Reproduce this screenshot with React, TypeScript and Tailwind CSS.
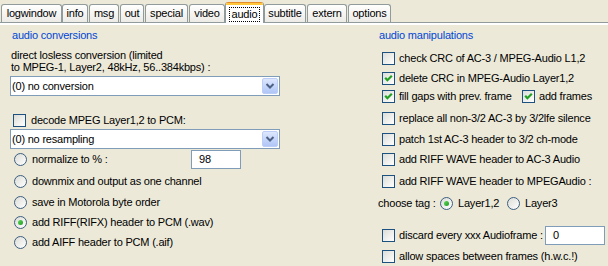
import React from 'react';

const tabs = [
  { label: 'logwindow', cls: 'w-[61px]' },
  { label: 'info', cls: 'w-[26px]' },
  { label: 'msg', cls: 'w-[30px] ml-[1px]' },
  { label: 'out', cls: 'w-[24px] ml-[1px]' },
  { label: 'special', cls: 'w-[43px] ml-[1px]' },
  { label: 'video', cls: 'w-[36px] ml-[1px]' },
  { label: 'audio', cls: 'w-[39px]', active: true },
  { label: 'subtitle', cls: 'w-[42px]' },
  { label: 'extern', cls: 'w-[40px] ml-[1px]' },
  { label: 'options', cls: 'w-[43px] ml-[1px]' },
];

function Tab({ label, cls, active }: { label: string; cls: string; active?: boolean }) {
  if (active) {
    return (
      <div className={`${cls} h-[21px] -mb-px relative z-10 flex flex-col bg-white border-x border-[#919B9C] rounded-t-[3px] overflow-hidden`}>
        <div className="h-[1px] bg-[#E68B2C]" />
        <div className="h-[2px] bg-[#FFC83C]" />
        <div className="flex-1 flex items-center justify-center">
          <span className="outline-1 outline-dotted outline-black px-[2px] leading-[13px]">{label}</span>
        </div>
      </div>
    );
  }
  return (
    <div className={`${cls} h-[18px] flex items-center justify-center border-x border-t border-[#919B9C] rounded-t-[3px] bg-linear-to-b from-white to-[#ECEBE6]`}>
      {label}
    </div>
  );
}

function CheckBox({ checked }: { checked?: boolean }) {
  return (
    <div className="w-[13px] h-[13px] shrink-0 border border-[#1C5180] bg-linear-to-br from-[#DCDCD7] to-white flex items-center justify-center">
      {checked && (
        <svg width="11" height="11" viewBox="0 0 11 11">
          <path d="M2.2 4.8 L4.4 7.2 L8.8 2.8" fill="none" stroke="#21A121" strokeWidth="2.2" />
        </svg>
      )}
    </div>
  );
}

function Radio({ checked }: { checked?: boolean }) {
  return (
    <div className="w-[13px] h-[13px] shrink-0 rounded-full border border-[#3C5F80] bg-linear-to-br from-[#DCDCD7] to-white flex items-center justify-center">
      {checked && <div className="w-[5px] h-[5px] rounded-full bg-linear-to-br from-[#5BD85B] to-[#1E9B1E]" />}
    </div>
  );
}

function Combo({ value }: { value: string }) {
  return (
    <div className="h-[20px] flex items-center bg-white border border-[#7F9DB9] pl-[1px]">
      <span className="flex-1">{value}</span>
      <div className="w-[16px] h-[16px] mr-px flex items-center justify-center rounded-[2px] border border-[#BCCEF8] bg-linear-to-b from-[#DDE7FD] to-[#B0C6F6]">
        <svg width="10" height="8" viewBox="0 0 10 8">
          <path d="M1.5 2 L5 5.5 L8.5 2" fill="none" stroke="#4D6185" strokeWidth="2" />
        </svg>
      </div>
    </div>
  );
}

function Field({ value, cls }: { value: string; cls: string }) {
  return <div className={`${cls} h-[19px] shrink-0 bg-white border border-[#7F9DB9] pl-[7px] flex items-center`}>{value}</div>;
}

export default function App() {
  return (
    <div className="w-[608px] h-[266px] overflow-hidden bg-[#ECE9D8] text-black text-[11px] leading-[13px] tracking-[-0.2px] whitespace-nowrap font-['Liberation_Sans',Arial,sans-serif]">
      <div className="h-[22px] flex items-end pl-[1px]">
        {tabs.map((t) => (
          <Tab key={t.label} {...t} />
        ))}
      </div>
      <div className="border-t border-[#919B9C]">
        <div className="h-[2px] bg-white" />
        <div className="flex pl-[10px]">
          {/* audio conversions */}
          <div className="w-[270px] flex flex-col">
            <div className="mt-[4px] pl-[2px] text-[#0046D5]">audio conversions</div>
            <div className="mt-[7px] pl-[1px] leading-[12px]">
              direct losless conversion (limited
              <br />
              to MPEG-1, Layer2, 48kHz, 56..384kbps) :
            </div>
            <div className="mt-[3px]">
              <Combo value="(0) no conversion" />
            </div>
            <div className="mt-[18px] flex items-center gap-[5px] pl-[3px]">
              <CheckBox />
              <span>decode MPEG Layer1,2 to PCM:</span>
            </div>
            <div className="mt-[2px]">
              <Combo value="(0) no resampling" />
            </div>
            <div className="h-[20px] flex items-center pl-[4px]">
              <Radio />
              <span className="ml-[5px] w-[159px] shrink-0">normalize to % :</span>
              <Field value="98" cls="w-[50px]" />
            </div>
            <div className="mt-[2px] h-[20px] flex items-center gap-[5px] pl-[4px]">
              <Radio />
              <span>downmix and output as one channel</span>
            </div>
            <div className="mt-[1px] h-[20px] flex items-center gap-[5px] pl-[4px]">
              <Radio />
              <span>save in Motorola byte order</span>
            </div>
            <div className="h-[20px] flex items-center gap-[5px] pl-[4px]">
              <Radio checked />
              <span>add RIFF(RIFX) header to PCM (.wav)</span>
            </div>
            <div className="h-[20px] flex items-center gap-[5px] pl-[4px]">
              <Radio />
              <span>add AIFF header to PCM (.aif)</span>
            </div>
          </div>

          {/* audio manipulations */}
          <div className="ml-[97px] flex-1 flex flex-col">
            <div className="mt-[4px] pl-[2px] text-[#0046D5]">audio manipulations</div>
            <div className="mt-[10px] h-[13px] flex items-center gap-[4px] pl-[5px]">
              <CheckBox />
              <span>check CRC of AC-3 / MPEG-Audio L1,2</span>
            </div>
            <div className="mt-[7px] h-[13px] flex items-center gap-[4px] pl-[5px]">
              <CheckBox checked />
              <span>delete CRC in MPEG-Audio Layer1,2</span>
            </div>
            <div className="mt-[5px] h-[13px] flex items-center pl-[5px]">
              <CheckBox checked />
              <span className="ml-[4px] w-[123px] shrink-0">fill gaps with prev. frame</span>
              <CheckBox checked />
              <span className="ml-[4px]">add frames</span>
            </div>
            <div className="mt-[9px] h-[13px] flex items-center gap-[4px] pl-[5px]">
              <CheckBox />
              <span>replace all non-3/2 AC-3 by 3/2lfe silence</span>
            </div>
            <div className="mt-[8px] h-[13px] flex items-center gap-[4px] pl-[5px]">
              <CheckBox />
              <span>patch 1st AC-3 header to 3/2 ch-mode</span>
            </div>
            <div className="mt-[7px] h-[13px] flex items-center gap-[4px] pl-[5px]">
              <CheckBox />
              <span>add RIFF WAVE header to AC-3 Audio</span>
            </div>
            <div className="mt-[9px] h-[13px] flex items-center gap-[4px] pl-[5px]">
              <CheckBox />
              <span>add RIFF WAVE header to MPEGAudio :</span>
            </div>
            <div className="mt-[8px] h-[14px] flex items-center pl-[1px]">
              <span className="w-[62px] shrink-0">choose tag :</span>
              <Radio checked />
              <span className="ml-[5px] w-[49px] shrink-0">Layer1,2</span>
              <Radio />
              <span className="ml-[5px]">Layer3</span>
            </div>
            <div className="mt-[16px] h-[19px] flex items-center pl-[5px]">
              <CheckBox />
              <span className="ml-[4px] w-[146px] shrink-0">discard every xxx Audioframe :</span>
              <Field value="0" cls="w-[60px]" />
            </div>
            <div className="mt-[5px] h-[13px] flex items-center gap-[4px] pl-[5px]">
              <CheckBox />
              <span>allow spaces between frames (h.w.c.!)</span>
            </div>
          </div>
        </div>
      </div>
    </div>
  );
}
